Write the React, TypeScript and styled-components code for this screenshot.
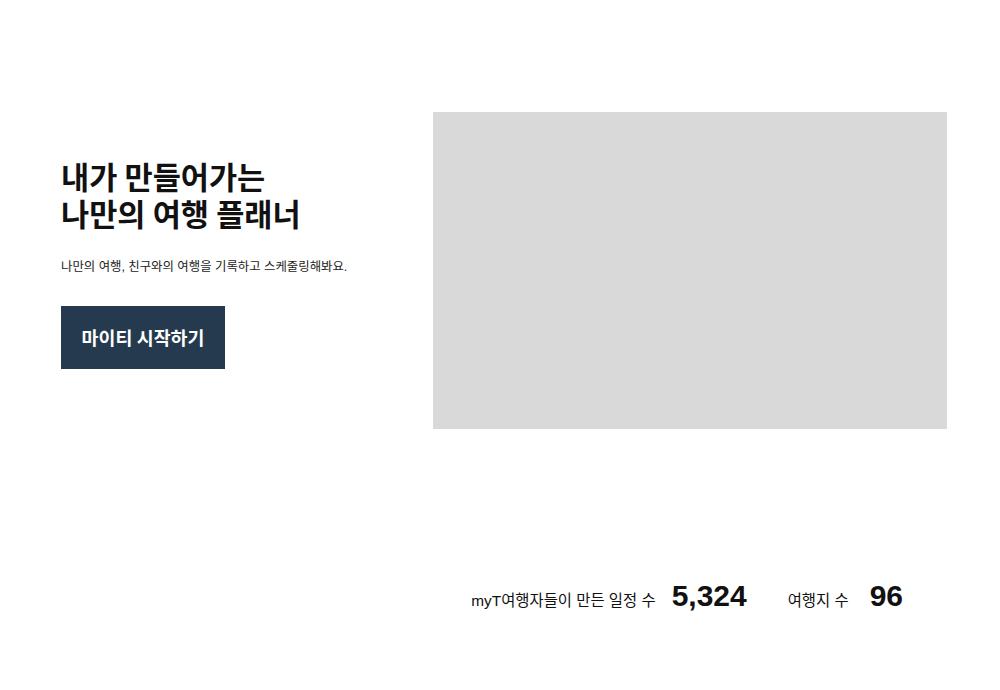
import React from "react";
import styled, { createGlobalStyle } from "styled-components";

const GlobalStyle = createGlobalStyle`
  body {
    margin: 0;
    background: #ffffff;
    font-family: "Liberation Sans", "Noto Sans CJK KR", sans-serif;
    color: #111111;
  }
`;

const App: React.FC = () => {
    return (
        <>
            <GlobalStyle />
            <Page>
                <Hero>
                    <TextColumn>
                        <Title>
                            내가 만들어가는
                            <br />
                            나만의 여행 플래너
                        </Title>
                        <Description>나만의 여행, 친구와의 여행을 기록하고 스케줄링해봐요.</Description>
                        <StartButton>마이티 시작하기</StartButton>
                    </TextColumn>
                    <ImageBox />
                </Hero>

                {/* 통계 영역 */}
                <Stats>
                    <StatItem $gap={16}>
                        <StatLabel>myT여행자들이 만든 일정 수</StatLabel>
                        <StatValue>5,324</StatValue>
                    </StatItem>
                    <StatItem $gap={21}>
                        <StatLabel>여행지 수</StatLabel>
                        <StatValue>96</StatValue>
                    </StatItem>
                </Stats>
            </Page>
        </>
    );
};

export default App;

const Page = styled.div`
  width: 1000px;
  height: 690px;
  display: flex;
  flex-direction: column;
  box-sizing: border-box;
  padding: 112px 53px 0 61px;
`;

const Hero = styled.div`
  display: flex;
  flex-direction: row;
  align-items: center;
  justify-content: space-between;
`;

const TextColumn = styled.div`
  display: flex;
  flex-direction: column;
  align-items: flex-start;
  padding-bottom: 14px;
`;

const Title = styled.h1`
  margin: 0;
  font-family: Inter, "Noto Sans CJK KR", sans-serif;
  font-size: 30.6px;
  line-height: 37px;
  font-weight: 700;
  color: #111111;
`;

const Description = styled.p`
  margin: 26px 0 0;
  font-size: 12.4px;
  line-height: 16px;
  color: #222222;
`;

const StartButton = styled.button`
  margin-top: 31px;
  width: 164px;
  height: 63px;
  border: none;
  background: #253a4e;
  color: #ffffff;
  font-family: Inter, "Noto Sans CJK KR", sans-serif;
  font-size: 18.4px;
  font-weight: 700;
  cursor: pointer;
`;

const ImageBox = styled.div`
  width: 514px;
  height: 317px;
  background: #d9d9d9;
`;

const Stats = styled.div`
  display: flex;
  flex-direction: row;
  justify-content: flex-end;
  align-items: baseline;
  gap: 41px;
  margin-top: 150px;
  padding-right: 44px;
`;

const StatItem = styled.div<{ $gap: number }>`
  display: flex;
  flex-direction: row;
  align-items: baseline;
  gap: ${({ $gap }) => $gap}px;
`;

const StatLabel = styled.span`
  font-size: 15.4px;
  color: #111111;
`;

const StatValue = styled.span`
  font-size: 30px;
  font-weight: 700;
  color: #111111;
`;
